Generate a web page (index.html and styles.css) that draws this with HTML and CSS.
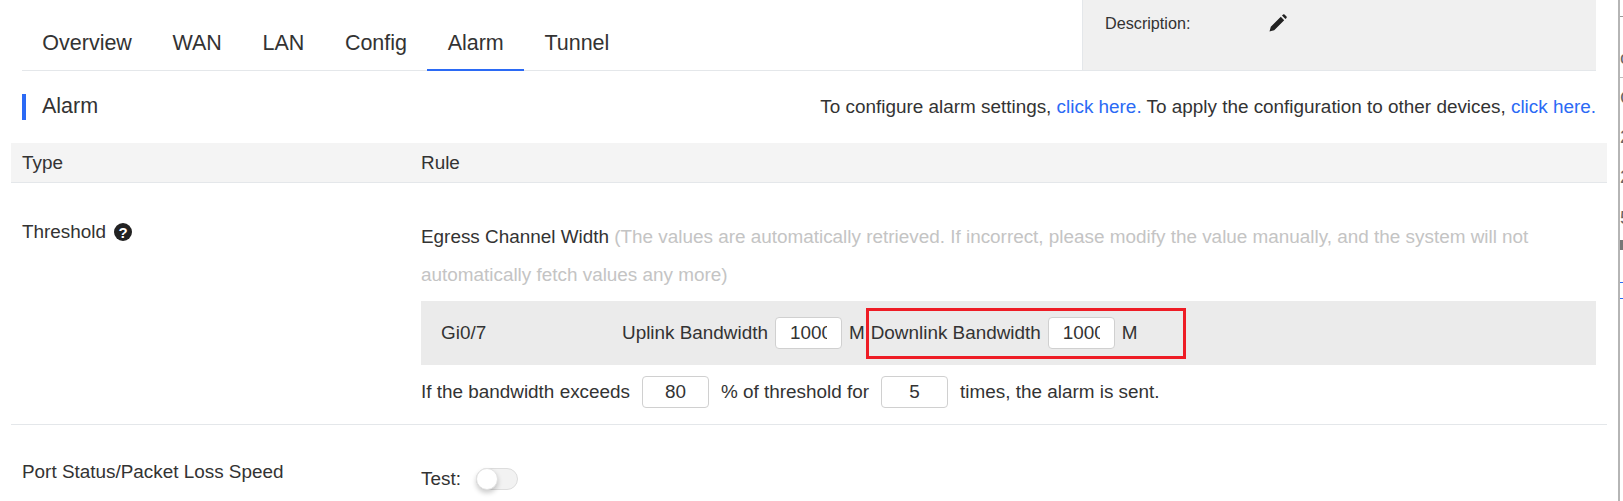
FILE: index.html
```html
<!doctype html>
<html>
<head>
<meta charset="UTF-8">
<title>Alarm</title>
<link rel="stylesheet" href="styles.css">
</head>
<body>
  <div class="page">
    <div class="main">
      <!--tabs and device info-->
      <div class="top">
        <ul class="tabs">
          <li>Overview</li>
          <li>WAN</li>
          <li>LAN</li>
          <li>Config</li>
          <li class="active">Alarm</li>
          <li>Tunnel</li>
        </ul>
        <div class="info">
          <span class="info-label">Description:</span>
          <svg class="pencil" width="18" height="18" viewBox="0 0 18 18"><path d="M0.500 17.500L1.800 12.800L11.800 2.800L15.200 6.200L5.200 16.200Z M13 1.600L14.100 0.500Q14.800 0 15.500 0.500L17.500 2.500Q18 3.200 17.500 3.900L16.400 5Z" fill="#222"/></svg>
        </div>
      </div>
      <!--section title-->
      <div class="section">
        <h2 class="section-title">Alarm</h2>
        <p class="section-tip">To configure alarm settings, <a>click here.</a> To apply the configuration to other devices, <a>click here.</a></p>
      </div>
      <div class="thead">
        <div class="col-type">Type</div>
        <div class="col-rule">Rule</div>
      </div>
      <!--threshold-->
      <div class="row row-threshold">
        <div class="col-type">
          Threshold
          <svg class="help" width="18" height="18" viewBox="0 0 18 18"><circle cx="9" cy="9" r="9" fill="#222"/><text x="9" y="14.500" text-anchor="middle" class="help-mark">?</text></svg>
        </div>
        <div class="col-rule">
          <p class="egress">Egress Channel Width <span class="muted">(The values are automatically retrieved. If incorrect, please modify the value manually, and the system will not automatically fetch values any more)</span></p>
          <div class="port">
            <span class="port-name">Gi0/7</span>
            <span class="bw">Uplink Bandwidth</span>
            <input class="num" value="1000">
            <span class="unit">M</span>
            <div class="marked">
              <span class="bw">Downlink Bandwidth</span>
              <input class="num" value="1000">
              <span class="unit">M</span>
            </div>
          </div>
          <div class="exceeds">
            <span>If the bandwidth exceeds</span>
            <input class="num num-c" value="80">
            <span>% of threshold for</span>
            <input class="num num-c" value="5">
            <span>times, the alarm is sent.</span>
          </div>
        </div>
      </div>
      <!--port status-->
      <div class="row row-port">
        <div class="col-type">Port Status/Packet Loss Speed</div>
        <div class="col-rule test">
          <span>Test:</span>
          <span class="switch"><i></i></span>
        </div>
      </div>
    </div>
    <!--window behind-->
    <div class="behind">
      <b class="g1">c</b>
      <b class="g2">G</b>
      <b class="g3">2</b>
      <b class="g4">2</b>
      <b class="g5">5</b>
      <u class="dark"></u>
      <u class="blue1"></u>
      <u class="blue2"></u>
      <u class="rule1"></u>
      <u class="rule2"></u>
    </div>
  </div>
</body>
</html>
```
FILE: styles.css
```css
*{
	box-sizing: border-box;
}
html, body{
	width:100%;
	height:100%;
	overflow:hidden;
}
body{
	margin:0;
	padding:0;
	background:#fff;
	color:#333;
	font-family:"Liberation Sans", Arial, sans-serif;
	font-size:18.900px;
}
.page{
	display:flex;
	height:501px;
}
.main{
	width:1618px;
	padding-left:11px;
	padding-right:11px;
	overflow:hidden;
}
.top{
	display:flex;
	justify-content:space-between;
	margin-left:11px;
	margin-right:11px;
	height:71px;
	border-bottom:1px solid #e4e7ea;
}
.tabs{
	display:flex;
	list-style:none;
	margin:0;
	padding:0;
}
.tabs li{
	padding:30px 20.300px 0;
	height:71px;
	font-size:21.500px;
	line-height:26px;
}
.tabs li.active{
	border-bottom:2px solid #2b6af5;
}
.info{
	display:flex;
	width:514px;
	background:#f0f0f0;
	border-left:1px solid #e4e7ea;
	padding:14px 0 0 22px;
}
.info-label{
	width:164px;
	font-size:16.200px;
	line-height:18px;
}
.section{
	display:flex;
	justify-content:space-between;
	margin:23px 11px 0;
	height:49px;
}
.section-title{
	margin:0;
	height:26px;
	padding-left:16px;
	border-left:4px solid #2b6af5;
	font-size:21.500px;
	font-weight:normal;
	line-height:24px;
}
.section-tip{
	margin:0;
	line-height:26px;
}
.section-tip a{
	color:#2b6af5;
}
.thead{
	display:flex;
	height:40px;
	background:#f4f4f4;
	border-bottom:1px solid #e4e7ea;
	line-height:39px;
}
.col-type{
	width:410px;
	padding-left:11px;
	flex:none;
}
.col-rule{
	flex:1;
	padding-right:11px;
}
.row{
	display:flex;
}
.row-threshold{
	height:242px;
	padding-top:31px;
	border-bottom:1px solid #e4e7ea;
}
.row-threshold .col-type{
	display:flex;
	align-items:flex-start;
	gap:8px;
	padding-top:7px;
	line-height:22px;
}
.help{
	margin-top:2px;
}
.help-mark{
	fill:#fff;
	font-size:15px;
	font-weight:bold;
}
.egress{
	margin:4px 0 0;
	line-height:38px;
}
.muted{
	color:#c4c4c4;
}
.port{
	display:flex;
	align-items:center;
	height:64px;
	margin-top:7px;
	padding-left:20px;
	background:#ebebeb;
}
.port-name{
	width:181px;
}
.num{
	width:67px;
	height:32px;
	margin:0;
	padding:0 14px;
	border:1px solid #d0d0d0;
	border-radius:4px;
	background:#fff;
	color:#333;
	font-family:inherit;
	font-size:18.900px;
}
.num-c{
	text-align:center;
}
.bw{
	margin-right:7px;
}
.unit{
	margin-left:7px;
}
.marked{
	display:flex;
	align-items:center;
	height:51px;
	margin-left:1px;
	padding:0 45px 0 2px;
	border:3px solid #ee1c25;
}
.exceeds{
	display:flex;
	align-items:center;
	gap:12px;
	margin-top:11px;
	height:32px;
}
.row-port{
	padding-top:35px;
}
.row-port .col-type{
	line-height:24px;
}
.test{
	display:flex;
	align-items:center;
	gap:15px;
	height:40px;
	margin-top:-1px;
}
.switch{
	position:relative;
	display:block;
	width:42px;
	height:22px;
	border:1px solid #ddd;
	border-radius:11px;
	background:#f2f2f2;
}
.switch i{
	position:absolute;
	left:-1px;
	top:-1px;
	width:22px;
	height:22px;
	border-radius:50%;
	background:#fff;
	border:1px solid #e2e2e2;
	box-shadow:0 3px 5px rgba(0,0,0,.2);
}
.behind{
	position:relative;
	flex:1;
	overflow:hidden;
	border-left:2px solid #b5b5b5;
	font-size:19px;
	line-height:22px;
	color:#666;
}
.behind b{
	position:absolute;
	left:0;
	font-weight:normal;
}
.behind u{
	position:absolute;
	left:0;
	width:100%;
}
.g1{ top:47px; }
.g2{ top:87px; }
.g3{ top:126px; }
.g4{ top:166px; }
.g5{ top:207px; }
.dark{ top:240px; height:10px; background:#777; }
.blue1{ top:282px; height:1px; background:#2b6af5; }
.blue2{ top:298px; height:1px; background:#2b6af5; }
.rule1{ top:16px; height:1px; background:#999; }
.rule2{ top:77px; height:1px; background:#bbb; }
```
